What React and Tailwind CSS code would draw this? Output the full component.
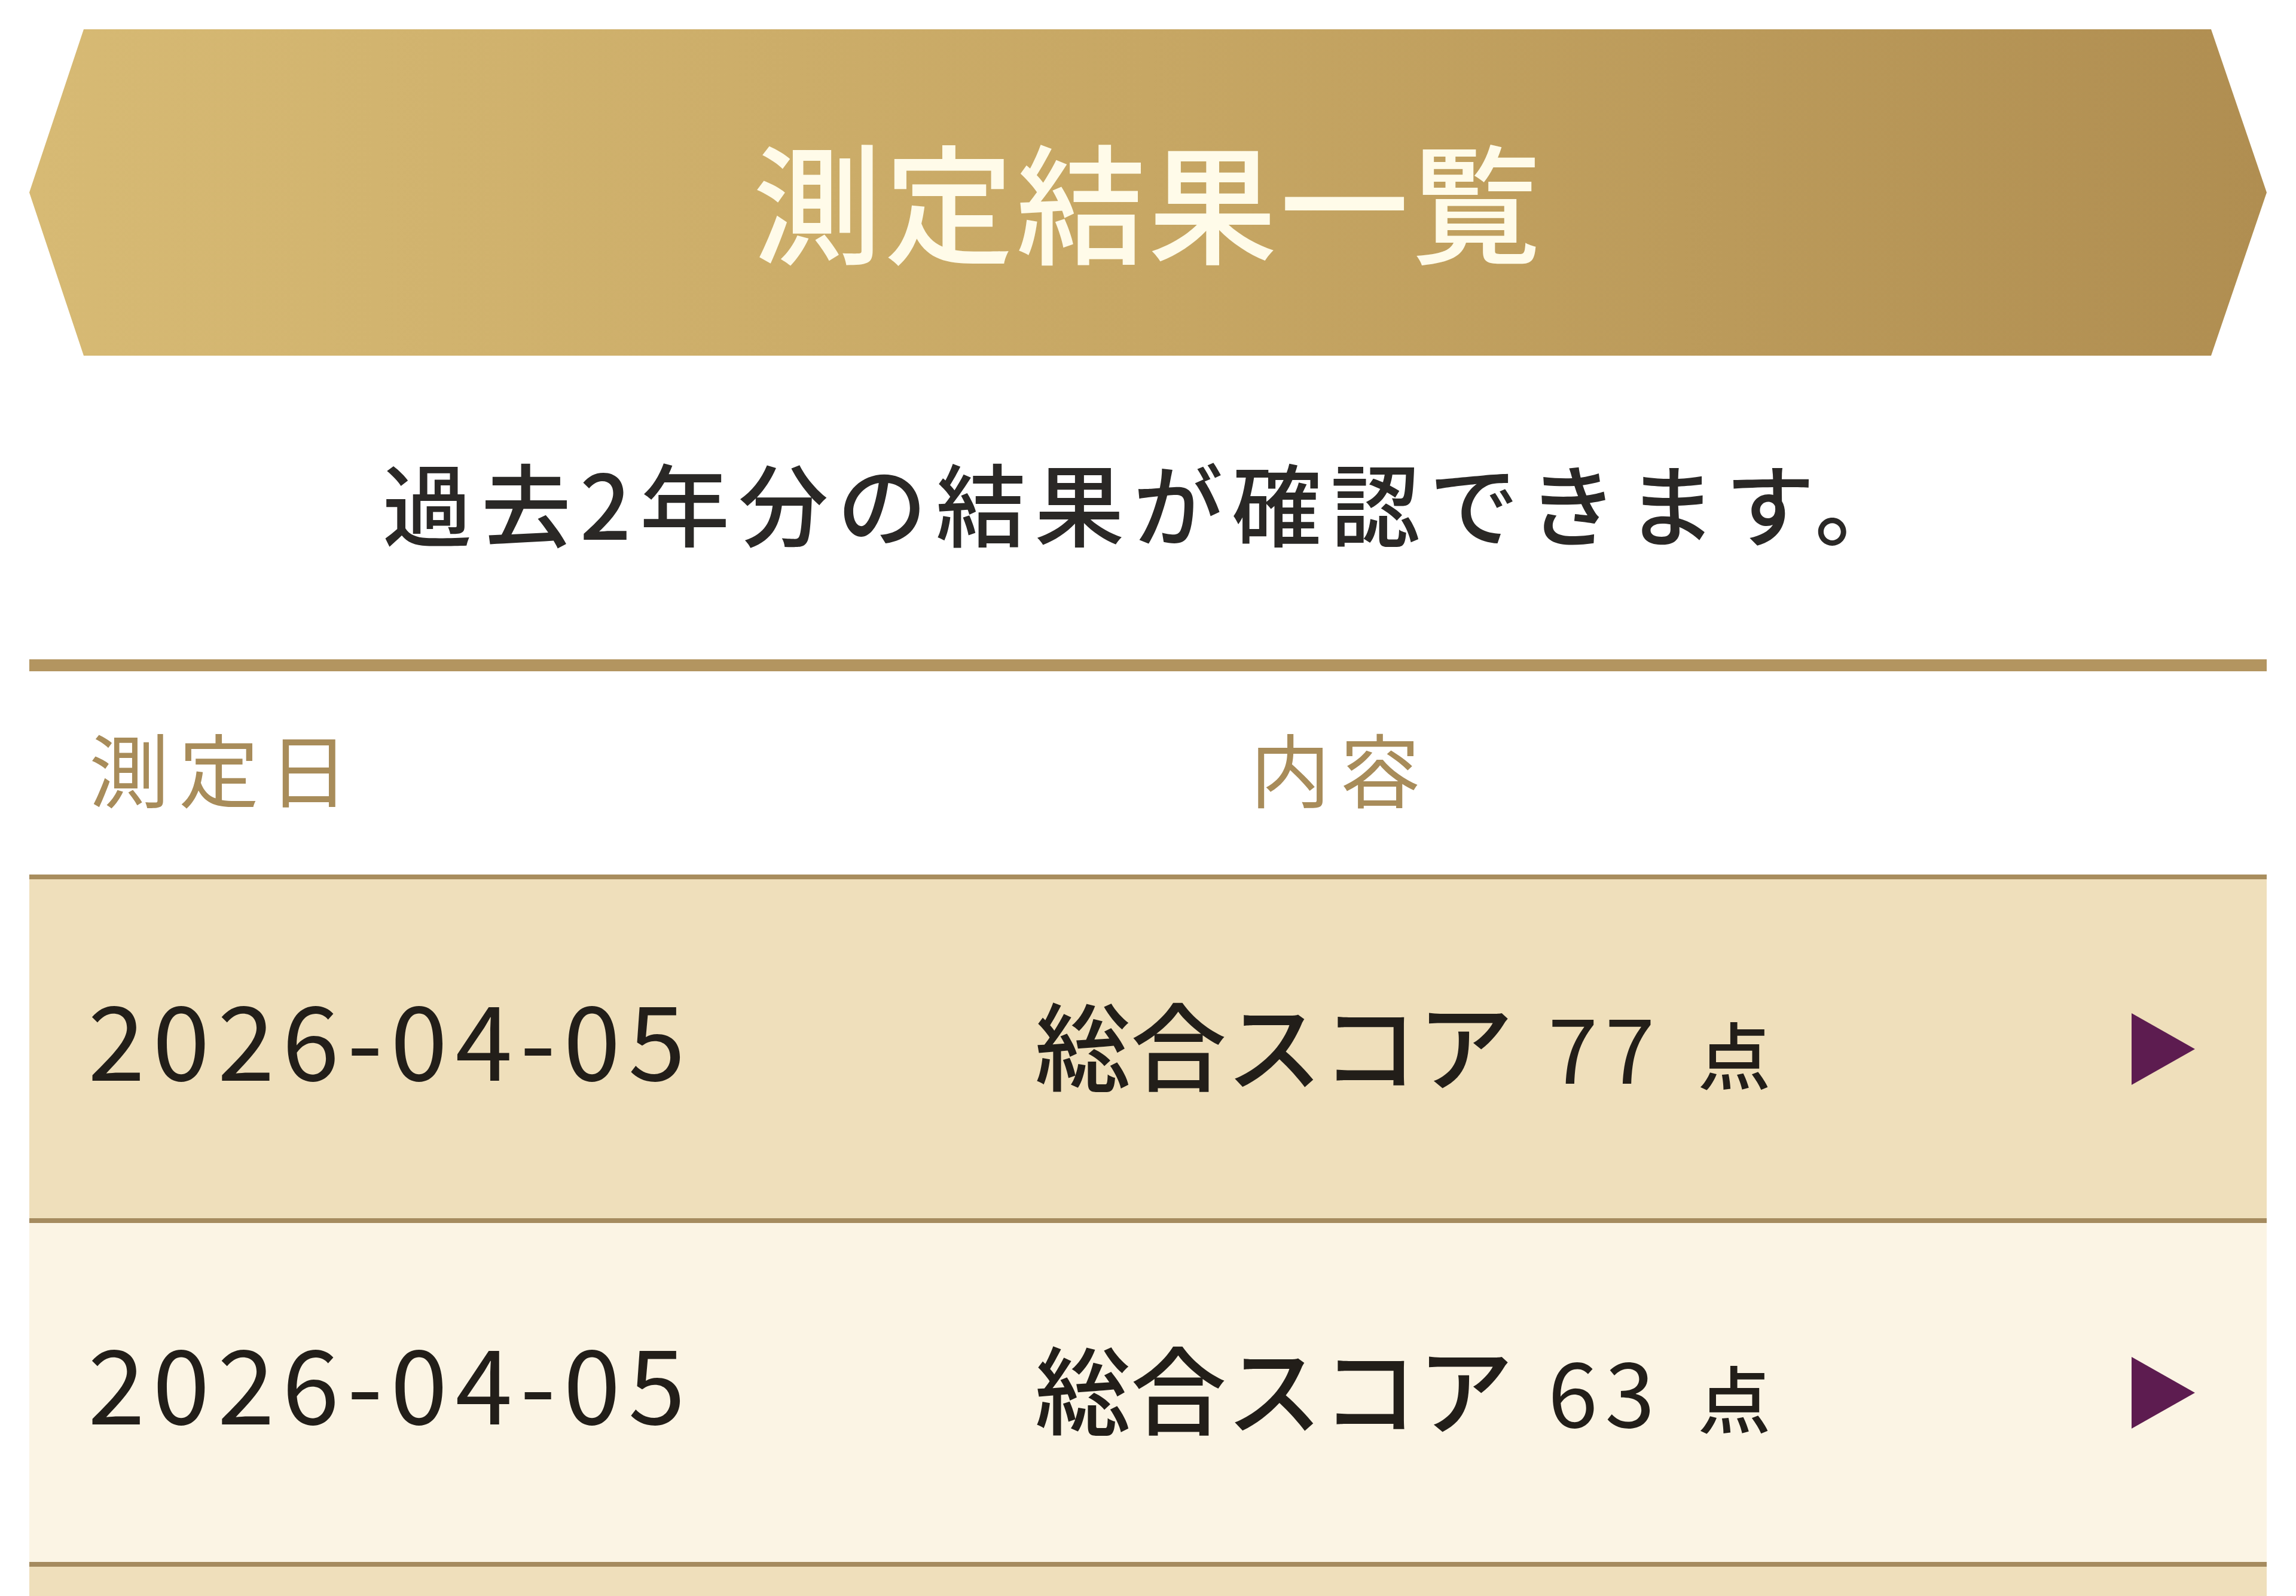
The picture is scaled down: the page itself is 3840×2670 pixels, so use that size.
import React from 'react';

const results = [
  { date: '2026-04-05', score: 77 },
  { date: '2026-04-05', score: 63 },
];

const Arrow = () => (
  <svg width="106" height="120" viewBox="0 0 106 120" className="block">
    <polygon points="0,0 106,60 0,120" fill="#5d1c50" />
  </svg>
);

const App = () => {
  return (
    <div className="h-[2670px] w-full overflow-hidden bg-white px-[49px] pt-[49px] font-['Noto_Sans_CJK_JP',sans-serif]">
      {/* title banner */}
      <div className="flex h-[546px] items-center justify-center bg-linear-to-r from-[#d7ba74] via-[#c7a764] to-[#b08e51] pt-[18px] [clip-path:polygon(91px_0,calc(100%_-_93px)_0,100%_50%,calc(100%_-_93px)_100%,91px_100%,0_50%)]">
        <h1 className="text-[216px] leading-none font-medium tracking-[0.02em] text-[#fffbe9]">
          測定結果一覧
        </h1>
      </div>

      <p className="mt-[168px] text-center text-[150px] leading-none font-medium tracking-[0.1em] text-[#2a2826]">
        過去2年分の結果が確認できます。
      </p>

      {/* table */}
      <div className="mt-[190px] border-t-[20px] border-[#b39560]">
        <div className="flex h-[348px] items-center border-b-[8px] border-[#a88d5e] pb-[20px] text-[134px] leading-none tracking-[0.12em] text-[#a88c5a]">
          <div className="w-[1682px] pl-[100px]">測定日</div>
          <div className="pl-[360px]">内容</div>
        </div>

        {results.map((r, i) => (
          <div
            key={i}
            className={
              'flex h-[575px] items-center border-b-[8px] border-[#a58b5f] text-[#221e19] ' +
              (i % 2 === 0 ? 'bg-[#efdfbb]' : 'bg-[#fbf4e4]')
            }
          >
            <div className="w-[1682px] pb-[44px] pl-[98px] text-[172px] leading-none tracking-[0.075em]">
              {r.date}
            </div>
            <div className="flex flex-1 items-baseline pb-[24px] leading-none font-medium">
              <span className="text-[160px]">総合スコア</span>
              <span className="ml-[58px] text-[150px] font-normal tracking-[0.08em]">{r.score}</span>
              <span className="ml-[60px] text-[122px]">点</span>
            </div>
            <div className="pr-[120px]">
              <Arrow />
            </div>
          </div>
        ))}
        <div className="h-[80px] bg-[#efdfbb]" />
      </div>
    </div>
  );
};

export default App;
